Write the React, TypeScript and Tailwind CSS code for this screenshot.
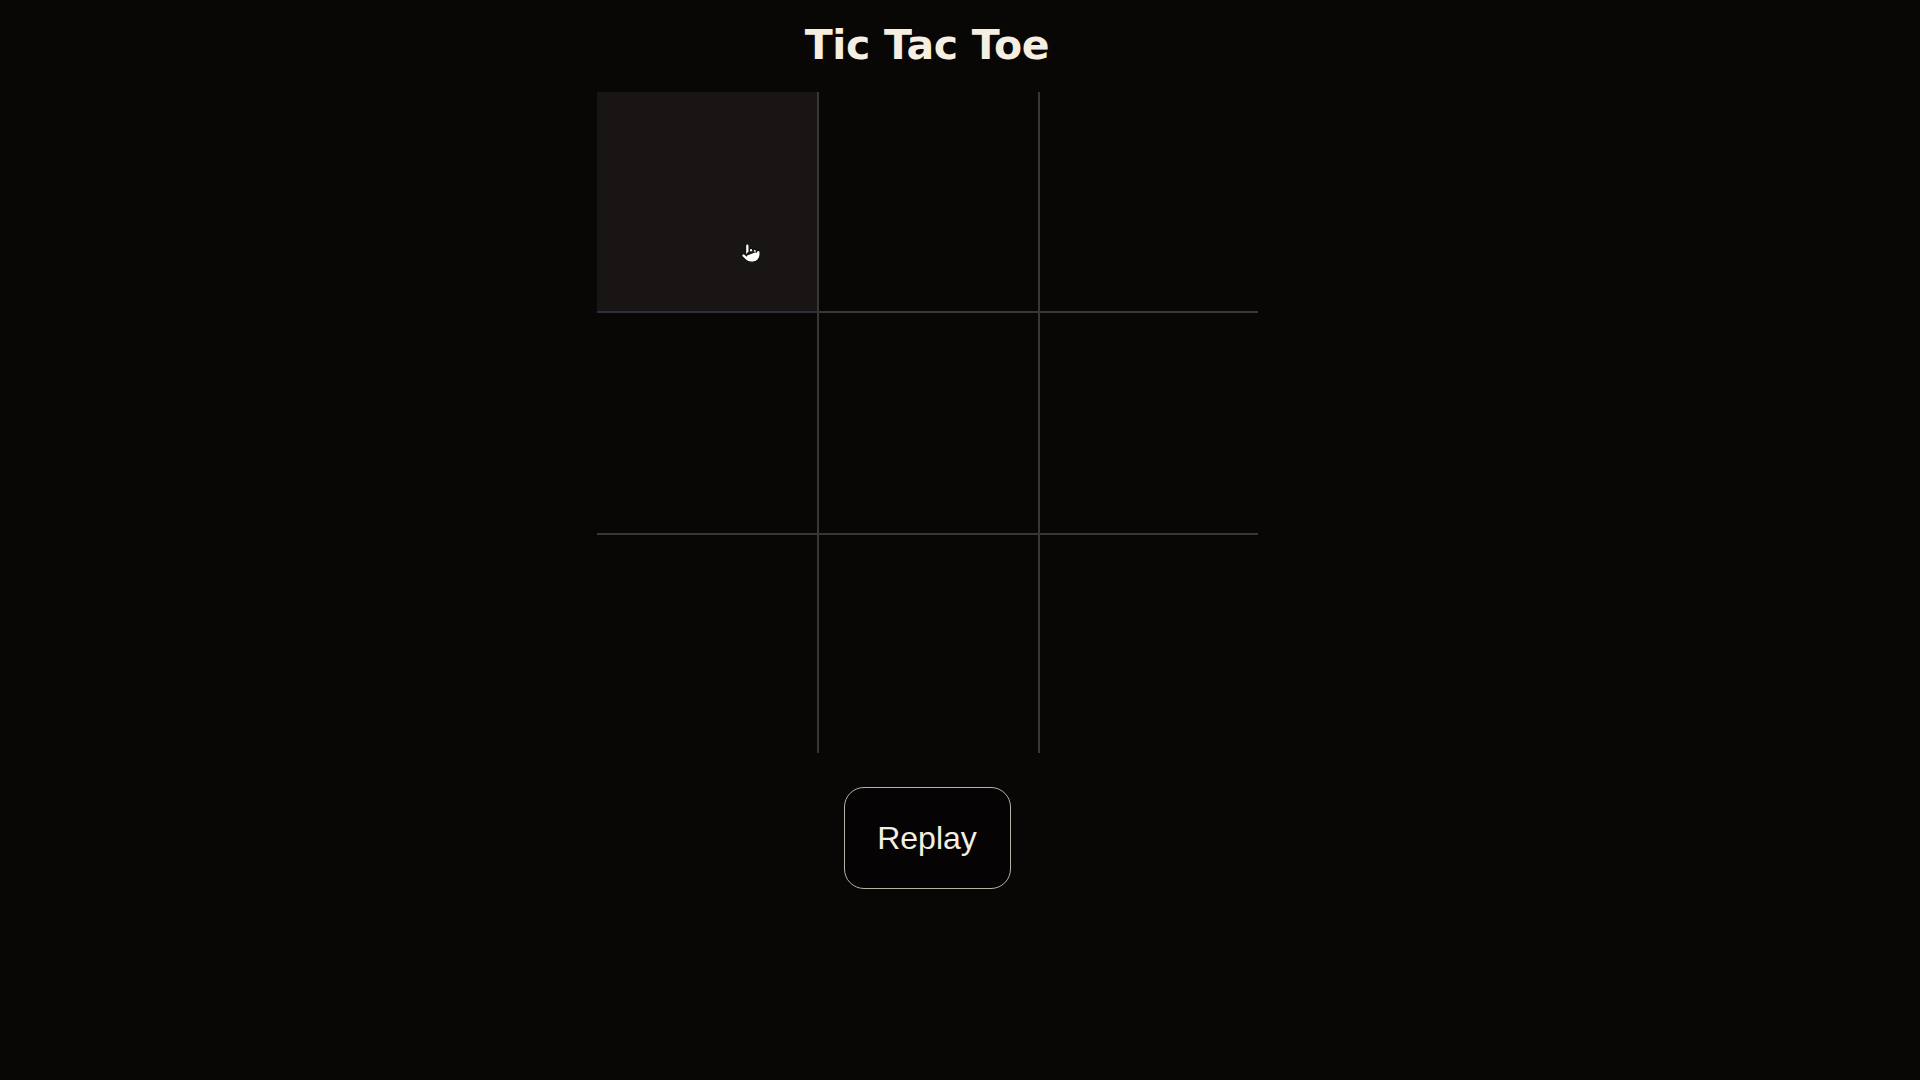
import { useState } from 'react';
import { Pointer } from 'lucide-react';

const cells = Array.from({ length: 9 }, (_, i) => i);

function cellBorder(i: number) {
  const col = i % 3;
  const row = Math.floor(i / 3);
  return [col < 2 ? 'border-r-2' : '', row < 2 ? 'border-b-2' : ''].join(' ');
}

export default function App() {
  const [board] = useState<(string | null)[]>(Array(9).fill(null));

  return (
    <div className="min-h-screen bg-[#090606] font-['DejaVu_Sans',sans-serif]">
      <div className="flex flex-col items-center pr-[66px] pt-[16px]">
        <h1 className="text-[41px] leading-[58px] font-bold text-[#f6efe1] tracking-[-0.3px]">Tic Tac Toe</h1>
        <div className="mt-[18px] grid grid-cols-[222px_221px_218px] grid-rows-[221px_222px_218px] w-[661px]">
          {cells.map((i) => (
            <button
              key={i}
              className={`relative border-[#3b3636] ${cellBorder(i)} ${i === 0 ? 'bg-[#1a1515] border-b-[#2e2e40]' : 'bg-transparent'} text-[#f6efe1] text-6xl`}
            >
              {board[i]}
              {i === 0 && (
                <Pointer className="absolute left-[143px] top-[150px] w-[22px] h-[22px] text-[#111] fill-white" strokeWidth={1.5} />
              )}
            </button>
          ))}
        </div>
        <button className="mt-[34px] w-[167px] h-[102px] rounded-[20px] border border-[#b9b0a6] bg-[#050303] text-[32px] text-[#f4eee4] font-['Liberation_Sans',Arial,sans-serif]">
          Replay
        </button>
      </div>
    </div>
  );
}
